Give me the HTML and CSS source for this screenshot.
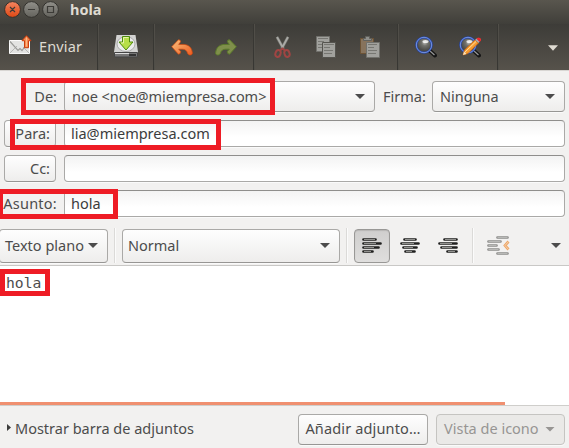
FILE: index.html
```html
<!DOCTYPE html>
<html lang="es">
<head>
<meta charset="utf-8">
<title>hola</title>
<link rel="stylesheet" href="styles.css">
</head>
<body>
<div class="window">
  <header class="titlebar">
    <svg class="controls" width="56" height="20" viewBox="0 0 56 20">
      <defs>
        <linearGradient id="close" x1="0" y1="0" x2="0" y2="1"><stop offset="0" stop-color="#f58560"/><stop offset="1" stop-color="#dd4814"/></linearGradient>
        <linearGradient id="grey" x1="0" y1="0" x2="0" y2="1"><stop offset="0" stop-color="#91908a"/><stop offset="1" stop-color="#64635d"/></linearGradient>
      </defs>
      <g stroke="#33322e">
        <circle cx="8.500" cy="9.500" r="7.900" fill="url(#close)"/>
        <circle cx="27.500" cy="9.500" r="7.900" fill="url(#grey)"/>
        <circle cx="46.500" cy="9.500" r="7.900" fill="url(#grey)"/>
      </g>
      <g fill="none" stroke="#3c3b37" stroke-width="1.200"><path d="M6 7l5 5M11 7l-5 5M24 9.500h7"/><path d="M43.500 6.500h6v6h-6z"/></g>
    </svg>
    <h1 class="title">hola</h1>
  </header>
  <nav class="toolbar">
    <div class="group send">
      <svg width="24" height="22" viewBox="0 0 24 22">
        <path d="M1.500 5.500h20v13h-20z" fill="#e3e3e2" stroke="#fafafa"/>
        <path d="M2 18l7-7M21 18l-6-6" stroke="#b7b7b5" fill="none"/>
        <path d="M2 6.500l8 9 2-2 2 2 3-4" fill="none" stroke="#9b9b99" stroke-width="1.200"/>
        <path d="M18.500.700l4.500 5h-2.500v7h-4v-7H14z" fill="#f58a52" stroke="#cb3d0d"/>
        <path d="M18.500 2.500v9" stroke="#fcb785"/>
      </svg>
      <span class="t-send">Enviar</span>
    </div>
    <div class="group save">
      <svg width="24" height="24" viewBox="0 0 24 24">
        <path d="M2.500 0h19L24 17v3H0v-3z" fill="#d3d3d2"/>
        <path d="M.5 17.500h23V21q0 1-1 1h-21q-1 0-1-1z" fill="#777" stroke="#444"/>
        <path d="M1 18.500h14" stroke="#ddd"/><path d="M15 20h7" stroke="#333" stroke-width="2"/>
        <ellipse cx="12" cy="9" rx="9" ry="7.500" fill="#ececec" stroke="#aaa"/>
        <path d="M8.500 1.500h7V7H19l-7 8-7-8h3.500z" fill="#b7df48" stroke="#4e8b0b"/>
        <path d="M9.500 2.500h5M9.500 2.500V8H7" fill="none" stroke="#e5f4a9"/>
      </svg>
    </div>
    <div class="group undo">
      <svg width="22" height="17" viewBox="0 0 22 17">
        <defs><linearGradient id="or" x1="0" y1="0" x2="1" y2="1"><stop offset="0" stop-color="#fbc27e"/><stop offset="1" stop-color="#ed5a1f"/></linearGradient></defs>
        <path d="M.7 7.700L7.400.8q2-.5 2.200 2L7.700 5.400h4.500c6 0 8.800 3.800 9.200 8.600.1 2.500-3.900 2.800-4.900.2-.6-2.700-2.400-4-5.300-4H7.700l2 2.300q0 2.700-2.300 2.700z" fill="url(#or)" stroke="#d5470c" stroke-width=".7"/>
      </svg>
      <svg class="redo" width="22" height="17" viewBox="0 0 22 17">
        <path d="M.7 7.700L7.400.8q2-.5 2.200 2L7.700 5.400h4.500c6 0 8.800 3.800 9.200 8.600.1 2.500-3.900 2.800-4.900.2-.6-2.700-2.400-4-5.300-4H7.700l2 2.300q0 2.700-2.300 2.700z" fill="#7f8f4b" stroke="#5c7a2b"/>
      </svg>
    </div>
    <div class="group clip">
      <svg width="17" height="22" viewBox="0 0 17 22">
        <path d="M3 1l6.500 12M14 1L7.500 13" stroke="#6e6e69" stroke-width="3"/>
        <path d="M3 1l6 11M14 1L8 12" stroke="#aaaaa6" stroke-width="1.800"/>
        <g fill="none" stroke="#a04543" stroke-width="2"><ellipse cx="4" cy="17.500" rx="2.500" ry="3.500" transform="rotate(20 4 17.500)"/><ellipse cx="13" cy="17.500" rx="2.500" ry="3.500" transform="rotate(-20 13 17.500)"/><path d="M6 14.500l2.500-2 2.500 2"/></g>
      </svg>
      <svg class="copy" width="20" height="22" viewBox="0 0 20 22">
        <g fill="#a1a19d" stroke="#71716c"><path d="M.5.5h13v15H.5z"/><path d="M6.500 6.500h13v15h-13z" stroke="#55544f"/></g>
        <path d="M2 2.500h10M2 5.500h6M2 8.500h4M2 11.500h4M8 8.500h10M8 11.500h6M8 14.500h9M8 17.500h8" stroke="#777772"/>
      </svg>
      <svg class="paste" width="20" height="22" viewBox="0 0 20 22">
        <path d="M.5 2.500h13v15H.5z" fill="#87735c" stroke="#6c5335"/><path d="M5.500.5h4v2h2v2h-8v-2h2z" fill="#8f8f8b" stroke="#61615c"/>
        <path d="M6.500 6.500h13v15h-13z" fill="#a1a19d" stroke="#71716c"/><path d="M8 8.500h9M8 11.500h6M8 14.500h9M8 17.500h8" stroke="#777772"/>
      </svg>
    </div>
    <div class="group find">
      <svg width="22" height="22" viewBox="0 0 22 22">
        <defs><radialGradient id="lens" cx=".55" cy=".35"><stop offset="0" stop-color="#bcbcb8"/><stop offset=".4" stop-color="#73736e"/><stop offset="1" stop-color="#4c4c49"/></radialGradient></defs>
        <g id="glass"><path d="M14.500 14.500l5.500 5" stroke="#161616" stroke-width="4" stroke-linecap="round"/><path d="M15 15l4.500 4" stroke="#999" stroke-width="1.200"/><circle cx="9" cy="9" r="7.700" fill="url(#lens)" stroke="#2546a7" stroke-width="2.200"/><circle cx="9" cy="9" r="7.700" fill="none" stroke="#88a5ee" stroke-width=".8"/><ellipse cx="10.500" cy="5.500" rx="3" ry="1.500" fill="#fff" opacity=".8"/></g>
      </svg>
      <svg class="replace" width="22" height="22" viewBox="0 0 22 22">
        <use href="#glass"/>
        <path d="M4 19l1.500-5L16 4l3.500 3L9 17.500z" fill="#f69b30" stroke="#cf6207" stroke-width=".7"/><path d="M6 16L17 5.500" stroke="#ffe0a0"/><path d="M4 19l1-3.500L7.500 18z" fill="#f7e5c2"/><path d="M16 4l1.500-1.500 3.500 3L19.500 7z" fill="#aaa"/><path d="M18 2.500q2-1 3.500.3.700 1.500-.8 2.700z" fill="#f51c25" stroke="#e33"/>
      </svg>
    </div>
    <div class="group more"><svg width="10" height="6" viewBox="0 0 10 6"><path d="M0 .3h10L5 5.700z" fill="#dfdbd2"/></svg></div>
  </nav>

  <main class="compose">
    <section class="row from">
      <label class="label">De:</label>
      <div class="combo sender"><span class="t-from">noe &lt;noe@miempresa.com&gt;</span><i class="arrow"></i></div>
      <label class="label-sign">Firma:</label>
      <div class="combo sign"><span>Ninguna</span><i class="arrow"></i></div>
      <b class="mark mark-from"></b>
    </section>
    <section class="row">
      <div class="btn head"><span>Para:</span></div><div class="entry"><span>lia@miempresa.com</span></div>
      <b class="mark mark-to"></b>
    </section>
    <section class="row">
      <div class="btn head"><span>Cc:</span></div><div class="entry"></div>
    </section>
    <section class="row">
      <label class="label t-asunto">Asunto:</label><div class="entry"><span>hola</span></div>
      <b class="mark mark-subject"></b>
    </section>
    <section class="format">
      <div class="btn mode"><span>Texto plano</span><i class="arrow"></i></div>
      <i class="sep"></i>
      <div class="combo style"><span>Normal</span><i class="arrow"></i></div>
      <i class="sep"></i>
      <div class="toggle"><svg width="20" height="15" viewBox="0 0 20 15"><path class="ln" d="M1.500 1.500h12M1.500 5.500h17M1.500 9.500h15M1.500 13.500h9"/><path class="hi" d="M2 1.500h11M2 5.500h12M2 9.500h10M2 13.500h7"/></svg></div>
      <svg class="center" width="20" height="15" viewBox="0 0 20 15"><path class="ln" d="M4.500 1.500h11M1.500 5.500h17M3.500 9.500h13M5.500 13.500h9"/><path class="hi" d="M5 1.500h10M2 5.500h12M4 9.500h9M6 13.500h6"/></svg>
      <svg class="right" width="20" height="15" viewBox="0 0 20 15"><path class="ln" d="M6.500 1.500h12M1.500 5.500h17M3.500 9.500h15M9.500 13.500h9"/><path class="hi" d="M7 1.500h11M2 5.500h12M4 9.500h10M10 13.500h7"/></svg>
      <i class="sep"></i>
      <svg class="outdent" width="23" height="19" viewBox="0 0 23 19"><path d="M10.500 1.500h10M1.500 5.500h12M1.500 9.500h8M1.500 13.500h10M10.500 17.500h10" stroke="#8d8d8b" stroke-width="2.700" stroke-linecap="round"/><path d="M10.500 1.500h10M1.500 5.500h12M1.500 9.500h8M1.500 13.500h10M10.500 17.500h10" stroke="#b8b8b6"/><path d="M21.500 5.500L18 9.500l3.500 4" fill="none" stroke="#eda768" stroke-width="2.700"/><path d="M21.500 5.500L18 9.500l3.500 4" fill="none" stroke="#f7d9bd" stroke-width=".8"/></svg>
      <i class="arrow last"></i>
    </section>
    <article class="editor"><span class="body-text">hola</span><b class="mark mark-body"></b></article>
    <div class="progress"></div>
  </main>
  <footer class="footer">
    <svg class="tri" width="4" height="7" viewBox="0 0 4 7"><path d="M0 0l4 3.500L0 7z" fill="#3c3c3c"/></svg>
    <span class="t-show">Mostrar barra de adjuntos</span>
    <div class="btn attach"><span class="t-add">Añadir adjunto…</span></div>
    <div class="btn view"><span class="t-view">Vista de icono</span><i class="arrow"></i></div>
  </footer>
</div>
</body>
</html>
```
FILE: styles.css
```css
* { box-sizing: border-box; }
body { margin: 0; background: #f2f1f0; color: #4c4c4c; font: 14.500px/20px "Noto Sans", "Open Sans", sans-serif; }
svg { display: block; flex: none; }
span, label { white-space: nowrap; }
.window { width: 569px; height: 448px; overflow: hidden; display: flex; flex-direction: column; }

.titlebar { height: 24px; display: flex; align-items: flex-start; padding-left: 4px; background: linear-gradient(#59564e, #403f3a); }
.title { margin: 0 0 0 10px; font-size: 14.500px; line-height: 19px; font-weight: 700; color: #dfdbd2; }
.toolbar { height: 46px; display: flex; background: linear-gradient(#3d3c38, #56524b); color: #dfdbd2; }
.group { display: flex; align-items: flex-start; padding-top: 11px; border-right: 1px solid #383733; box-shadow: 1px 0 #504e48; }
.send { width: 98px; padding-left: 8px; gap: 7px; }
.send span { line-height: 23px; letter-spacing: .15px; }
.save { width: 56px; padding-left: 16px; padding-top: 11px; }
.undo { width: 100px; padding: 15px 0 0 17px; }
.redo { margin-left: 22px; transform: scaleX(-1); }
.clip { width: 144px; padding: 12px 0 0 20px; }
.copy { margin-left: 25px; }
.paste { margin-left: 24px; }
.find { width: 100px; padding: 12px 0 0 17px; }
.replace { margin-left: 22px; }
.more { flex: 1; border: 0; box-shadow: none; padding: 21px 0 0 50px; }

.compose { height: 335px; border-top: 1px solid #d8d6d3; padding-top: 10px; display: flex; flex-direction: column; }
.row { position: relative; height: 27px; margin-bottom: 8px; display: flex; align-items: center; flex: none; padding-right: 4px; }
.from { height: 31px; }
.label { width: 64px; padding-right: 7px; text-align: right; }
.row label, .combo span, .btn span { padding-bottom: 2px; }
.combo, .btn { display: flex; align-items: center; border: 1px solid #aaa9a7; border-bottom-color: #979694; border-radius: 4px; background: linear-gradient(#fefefe, #eeedec); box-shadow: 0 1px #fafafa; }
.combo { height: 31px; justify-content: space-between; padding: 0 9px 0 7px; }
.sender { width: 311px; }
.t-from { letter-spacing: -.04px; }
.label-sign { width: 57px; padding-left: 8px; }
.sign { width: 133px; }
.arrow { flex: none; width: 10px; height: 5px; background: #4c4c4c; clip-path: polygon(0 0, 100% 0, 50% 100%); }
.head { width: 52px; height: 27px; margin: 0 8px 0 4px; justify-content: flex-end; padding-right: 5px; }
.entry { flex: 1; height: 27px; border: 1px solid #aaa9a7; border-top-color: #8f8e8c; border-radius: 4px; background: linear-gradient(#f3f3f3, #fff 65%); padding: 2px 6px; color: #3c3c3c; box-shadow: 0 1px #fafafa; }
.t-asunto { letter-spacing: .25px; }
.mark { position: absolute; border: 5px solid #ee1c25; }
.mark-from { left: 21px; top: -3px; width: 254px; height: 37px; }
.mark-to { left: 10px; top: -1px; width: 211px; height: 31px; }
.mark-subject { left: 0; top: -1px; width: 118px; height: 30px; border-left-width: 3px; }
.mark-body { left: 0; top: 3px; width: 50px; height: 27px; }

.format { height: 41px; flex: none; display: flex; align-items: center; border-bottom: 1px solid #c9c8c6; padding-top: 1px; }
.mode { width: 109px; height: 34px; margin-left: -1px; justify-content: space-between; padding: 0 9px 0 5px; }
.sep { width: 2px; height: 35px; background: #dbdad8; border-right: 1px solid #fbfbfb; margin-left: 6px; }
.style { width: 218px; height: 34px; margin-left: 6px; padding-left: 5px; }
.toggle { width: 36px; height: 34px; margin-left: 6px; border: 1px solid #999896; border-radius: 4px; background: linear-gradient(#cfcecd, #dfdedd); display: flex; align-items: center; justify-content: center; box-shadow: inset 0 1px 1px #b7b6b5; }
.center { margin-left: 10px; }
.right { margin-left: 18px; }
.right + .sep { margin-left: 14px; }
.ln { stroke: #20201f; stroke-width: 2.700; stroke-linecap: round; }
.hi { stroke: #92928f; stroke-width: 1; }
.outdent { margin-left: 13px; }
.last { margin-left: auto; margin-right: 8px; }
.editor { position: relative; flex: 1; background: #fff; padding: 7px 0 0 6px; }
.body-text { font: 14.700px/20px "DejaVu Sans Mono", monospace; display: block; }
.progress { height: 3px; width: 505px; background: #f09070; box-shadow: 64px 0 #fff; }

.footer { height: 43px; display: flex; align-items: center; border-top: 1px solid #cfcecb; padding: 4px 4px 0 7px; }
.tri { margin: -4px 4px 0 0; }
.t-show { padding-bottom: 2px; }
.attach { margin-left: auto; width: 130px; height: 31px; justify-content: center; }
.t-add { letter-spacing: .15px; }
.view { margin-left: 8px; width: 129px; height: 31px; justify-content: space-between; padding: 0 9px 0 7px; color: #979593; background: #eae9e7; border-color: #c5c4c1; }
.view .arrow { background: #979593; }
```
